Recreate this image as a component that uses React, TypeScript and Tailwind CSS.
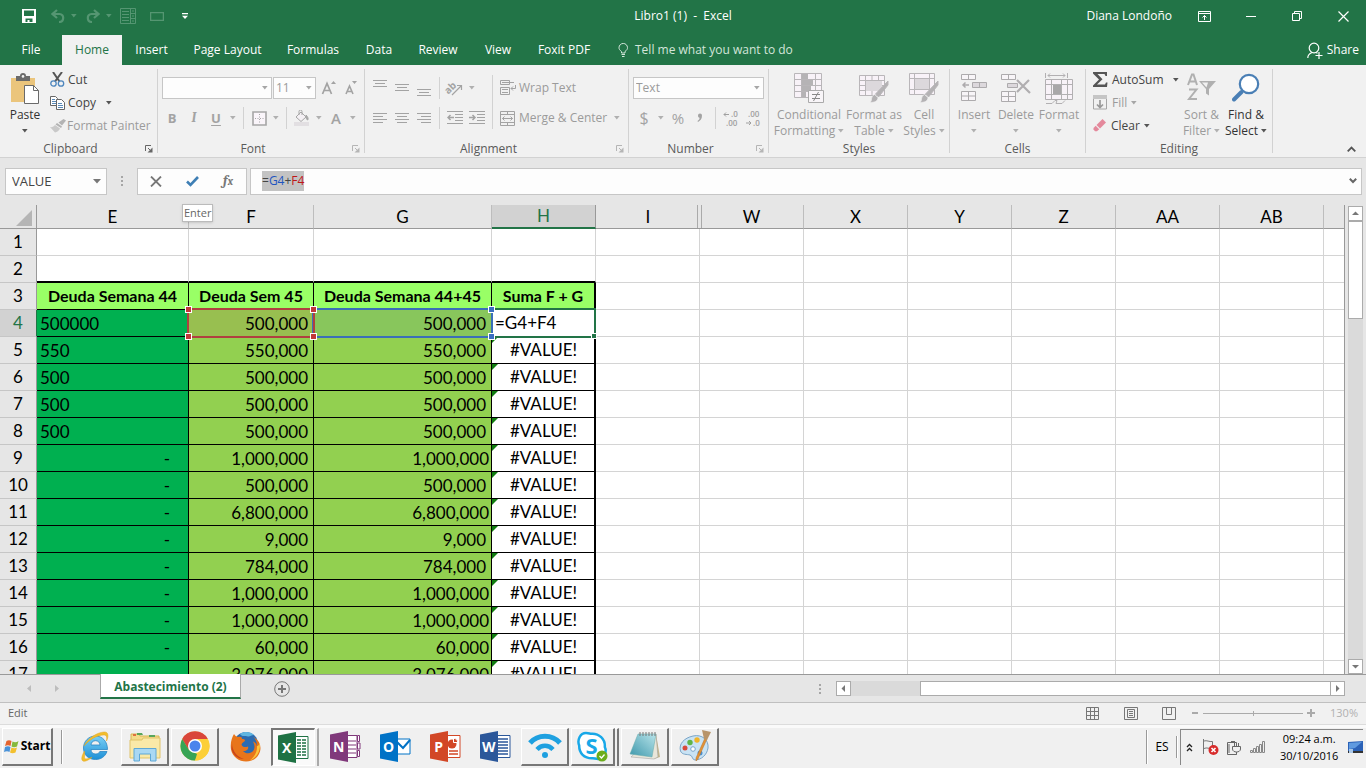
import React from "react";

type Kids = { children?: React.ReactNode };

function Caret({ className = "text-[#a6a6a6]" }: { className?: string }) {
  return (
    <svg width="6" height="4" viewBox="0 0 6 4" className={`shrink-0 ${className}`} aria-hidden="true">
      <path d="M0 0h5.6L2.8 3.4z" fill="currentColor" />
    </svg>
  );
}

function CaretBox({ dark = false }: { dark?: boolean }) {
  return (
    <span className="flex w-3 shrink-0 justify-center">
      <Caret className={dark ? "text-[#555]" : "text-[#b0b0b0]"} />
    </span>
  );
}

function Launcher({ dark = false }: { dark?: boolean }) {
  return (
    <svg width="8" height="8" viewBox="0 0 8 8" className={dark ? "text-[#666]" : "text-[#b5b5b5]"} aria-hidden="true">
      <path d="M.5 6V.5H6M3 3l3 3" fill="none" stroke="currentColor" />
      <path d="M7.500 2.500v5h-5z" fill="currentColor" />
    </svg>
  );
}

function Group({ label, width, launcher, children }: Kids & { label: string; width: string; launcher?: "dark" | "light" }) {
  return (
    <section aria-label={label} className={`flex shrink-0 ${width}`}>
      <div className="flex min-w-0 flex-1 flex-col">
        <div className="h-[72px] shrink-0">{children}</div>
        <div className="flex h-[17px] shrink-0 items-center pr-1 text-[#5a5a5a]">
          <span className={`flex-1 text-center ${launcher ? "-ml-1" : "pl-3"}`}>{label}</span>
          <button aria-label={`${label} settings`} className="w-2">
            {launcher && <Launcher dark={launcher === "dark"} />}
          </button>
        </div>
      </div>
      <div className="mt-px h-[84px] w-px bg-[#d2d2d2]" />
    </section>
  );
}

function Tool({ label, children }: Kids & { label: string }) {
  return (
    <button aria-label={label} className="flex h-[22px] w-[22px] shrink-0 items-center justify-center text-[#a3a3a3]">
      {children}
    </button>
  );
}

function Sep() {
  return <span className="mx-1 h-[22px] w-px shrink-0 bg-[#d2d2d2]" />;
}

function Lines({ rows, size = 15 }: { rows: [number, number, number][]; size?: number }) {
  return (
    <svg width={size} height="16" viewBox={`0 0 ${size} 16`} aria-hidden="true">
      {rows.map(([y, x1, x2]) => (
        <path key={y} d={`M${x1} ${y + 0.5}H${x2}`} stroke="currentColor" />
      ))}
    </svg>
  );
}

function BigButton({ icon, lines, caret, width, dark = false }: { icon: React.ReactNode; lines: string[]; caret?: boolean; width: string; dark?: boolean }) {
  const tone = dark ? "text-[#333]" : "text-[#9b9b9b]";
  return (
    <button className={`flex shrink-0 flex-col items-center pt-1 leading-4 ${width} ${tone}`}>
      <span className="mb-[3px] flex h-8 items-center justify-center">{icon}</span>
      <span className="whitespace-nowrap">{lines[0]}</span>
      <span className={`flex h-4 items-center whitespace-nowrap ${lines[1] ? "gap-[3px]" : ""}`}>
        {lines[1]}
        {caret && <Caret className={dark ? "text-[#555]" : "text-[#b0b0b0]"} />}
      </span>
    </button>
  );
}

/* ---------- Ribbon drawings ---------- */

const PasteIcon = () => (
  <svg width="30" height="31" viewBox="0 0 30 31">
    <path d="M1 5h24v24H1z" fill="#ebc57c" />
    <path d="M6 3h4a3 3 0 0 1 6 0h4v5H6z" fill="#6a6a6a" />
    <circle cx="13" cy="3.4" r="1.3" fill="#f1f1f1" />
    <path d="M14.500 12.500h9l5 5v13h-14z" fill="#fff" stroke="#6a6a6a" />
    <path d="M23.500 12.500v5h5" fill="none" stroke="#6a6a6a" />
  </svg>
);
const CutIcon = () => (
  <svg width="15" height="15" viewBox="0 0 15 15" fill="none">
    <path d="M3 0l6.500 9.500M12 0L5 9.500" stroke="#555" strokeWidth="2" />
    <circle cx="3.500" cy="11.500" r="2.700" stroke="#4e86bd" strokeWidth="1.300" />
    <circle cx="11" cy="11.500" r="2.700" stroke="#4e86bd" strokeWidth="1.300" />
  </svg>
);
const CopyIcon = () => (
  <svg width="15" height="14" viewBox="0 0 15 14" fill="#fff" stroke="#666">
    <path d="M.5.5h5l2 2v7h-7z" />
    <path d="M2 3.500h3M2 5.500h4M2 7.500h4" stroke="#5a8ab8" />
    <path d="M6.500 3.500h5l3 3v7h-8z" />
    <path d="M8 7.500h4M8 9.500h5M8 11.500h5" stroke="#5a8ab8" />
  </svg>
);
const PainterIcon = () => (
  <svg width="16" height="14" viewBox="0 0 16 14" fill="#b3b3b3">
    <path d="M13.500 0L16 1.500 12 6.500l-3.500-3z" />
    <path d="M7 4l5 3.500-1 1.500-5.500-3.500z" />
    <path d="M5 6l5 3.500C9 12 7 13 5 13.500L0 8c2 .5 4-.5 5-2z" fill="#c9c9c9" />
  </svg>
);
const BordersIcon = () => (
  <svg width="15" height="15" viewBox="0 0 15 15" fill="none">
    <path d="M1 1h13v13H1z" stroke="#a6a6a6" strokeWidth="1.600" fill="#faf5fa" />
    <path d="M7.500 3v10M3 7.500h10" stroke="#a6a6a6" strokeDasharray="1 1.500" />
  </svg>
);
const FillIcon = () => (
  <svg width="16" height="16" viewBox="0 0 16 16" fill="none" stroke="#a6a6a6">
    <path d="M0 12h15v4H0z" fill="#e2dfe2" stroke="none" />
    <path d="M2 7l5-5 5 5-5 4.500z" fill="#f4f0f4" />
    <path d="M5 5V1.500a1.500 1.500 0 0 1 3 0V5" />
    <path d="M12 5c2 2 2.500 3.500 1.800 5-1.500 0-1.800-3-1.800-5z" fill="#a6a6a6" />
  </svg>
);
const OrientIcon = () => (
  <svg width="18" height="16" viewBox="0 0 18 16" className="overflow-visible">
    <text x="-1" y="11" fontSize="10" fontWeight="700" fontFamily="Open Sans" fill="#a3a3a3" transform="rotate(-45 5 9)">ab</text>
    <path d="M6 15L15 6M11 5.500h4.500V10" fill="none" stroke="#a3a3a3" strokeWidth="1.200" />
  </svg>
);
const IndentIcon = ({ right = false }: { right?: boolean }) => (
  <svg width="16" height="14" viewBox="0 0 16 14" fill="none" stroke="#a3a3a3">
    <path d="M0 .5h16M8 3.500h8M8 6.500h8M8 9.500h8M0 12.500h16" />
    <path d={right ? "M0 6.500h6M3.500 4L6 6.500 3.500 9" : "M7 6.500H1M3.500 4L1 6.500 3.500 9"} strokeWidth="1.500" />
  </svg>
);
const WrapIcon = () => (
  <svg width="16" height="16" viewBox="0 0 16 16" fill="none" stroke="#a3a3a3">
    <path d="M.5.5h9v4h-9zM.5 7.500h9v7h-9zM2 2.500h12M2 9.500h6M2 12.500h6" />
    <path d="M15.500 5v3.500H11M13 6.500l-2 2 2 2" />
  </svg>
);
const MergeIcon = () => (
  <svg width="16" height="15" viewBox="0 0 16 15" fill="none" stroke="#a3a3a3">
    <path d="M.5.5h14v14H.5zM.5 3.500h14M.5 11.500h14M7.500.5v3M7.500 11.500v3" />
    <path d="M2.500 7.500h10M4.500 5.500l-2 2 2 2M10.500 5.500l2 2-2 2" />
  </svg>
);
const DecimalIcon = ({ more = false }: { more?: boolean }) => (
  <svg width="16" height="15" viewBox="0 0 16 15" fontFamily="Open Sans" fontSize="8" fontWeight="600" fill="#a0a0a0" className="overflow-visible">
    <text x={more ? 8 : 3} y="6">{more ? ".0" : ".00"}</text>
    <text x={more ? 3 : 8} y="15">{more ? ".00" : ".0"}</text>
    <path d={more ? "M6 3.500H1M3 1.500l-2 2 2 2" : "M1 12h5M4 10l2 2-2 2"} fill="none" stroke="#a0a0a0" />
  </svg>
);
const Brush = () => (
  <>
    <path d="M29 8v4L19.500 24l-3-3z" fill="#b4b2b4" />
    <path d="M15.500 21.500l3.500 3c0 4-4 5-8 5 2-2 1-3 2-5.500.6-1.400 1.500-2 2.500-2.500z" fill="#b4b2b4" stroke="#f1f1f1" strokeWidth=".7" />
  </>
);
const CondIcon = () => (
  <svg width="30" height="31" viewBox="0 0 30 31" fill="none" stroke="#b9b6b9">
    <path d="M.5.5h27v24H.5zM.5 6.500h27M.5 12.500h27M.5 18.500h27M7.500.5v24M21.500.5v24" fill="#f8f2f8" />
    <path d="M8 1h6v5H8zM8 7h11v5H8zM8 13h9v5H8zM8 19h4v5H8z" fill="#b5b3b5" stroke="none" />
    <path d="M14.500 17.500h15v12h-15z" fill="#f8f5f8" stroke="#aaa" />
    <path d="M18 21.500h8M18 25.500h8M24.500 19l-5 9" stroke="#888" />
  </svg>
);
const TableIcon = () => (
  <svg width="30" height="31" viewBox="0 0 30 31" fill="none" stroke="#b9b6b9">
    <path d="M.5 2.500h25v20H.5zM.5 7.500h25M.5 12.500h25M.5 17.500h25M6.500 2.500v20M13 2.500v20M19.500 2.500v20" fill="#f8f2f8" />
    <path d="M7 8h16v10H7z" fill="#dcd8dc" stroke="none" />
    <Brush />
  </svg>
);
const CellStyleIcon = () => (
  <svg width="30" height="31" viewBox="0 0 30 31" fill="none" stroke="#b9b6b9">
    <path d="M.5.5h25v21H.5zM.5 5.500h25M.5 16.500h25M5.500.5v21M20.500.5v21" fill="#f8f2f8" />
    <path d="M6 6h14v10H6z" fill="#dcd8dc" stroke="none" />
    <Brush />
  </svg>
);
const InsertIcon = () => (
  <svg width="28" height="28" viewBox="0 0 28 28" fill="#f8f5f8" stroke="#adabad">
    <path d="M1.500.5h14v5h-14zM8.500.5v5M1.500 17.500h14v9h-14zM8.500 17.500v9M1.500 22h14" />
    <path d="M12.500 8.500h14v5h-14zM19.500 8.500v5" fill="#dcd8dc" />
    <path d="M9 11H3M5.500 8.500L3 11l2.500 2.500" fill="none" strokeWidth="1.500" />
  </svg>
);
const DeleteIcon = () => (
  <svg width="30" height="28" viewBox="0 0 30 28" fill="#f8f5f8" stroke="#adabad">
    <path d="M.5.5h14v5H.500zM7.500.5v5M.5 17.500h14v10H.500zM7.500 17.500v10M.5 22.500h14" />
    <path d="M6.500 9.500h10v4h-10z" fill="#dcd8dc" />
    <path d="M16 6l13 13M28 6L16 18" fill="none" stroke="#b0aeb0" strokeWidth="2.200" />
  </svg>
);
const FormatIcon = () => (
  <svg width="29" height="31" viewBox="0 0 29 31" fill="none" stroke="#b2b0b2">
    <path d="M.5 0v5M22.500 0v5M3 2.500h17M5 .5l-2 2 2 2M18 .5l2 2-2 2" />
    <path d="M.5 6.500h27v20H.5zM.5 11.500h27M.5 21.500h27M6.500 6.500v20M16.500 6.500v20M22.500 6.500v20" fill="#f8f2f8" />
    <path d="M8 12h8v9H8z" fill="#a9a7a9" stroke="none" />
    <path d="M1 30.500h6l3-3h2l-1 3h6l3-3" />
  </svg>
);
const SumIcon = () => (
  <svg width="15" height="15" viewBox="0 0 15 15">
    <path d="M0 0h14v4h-1.500L11.500 2H4.500l5 5.300L4 12.500h8l1-2h1.500l-.5 4.500H0v-1.500l6-6L0 1.500z" fill="#555" />
  </svg>
);
const DownFillIcon = () => (
  <svg width="15" height="15" viewBox="0 0 15 15" fill="none" stroke="#a6a6a6">
    <path d="M.5 1h13v13H.5z" />
    <path d="M0 0h14v4H0z" fill="#c5c5c5" stroke="none" />
    <path d="M7 5v7M4 9.500l3 3 3-3" stroke="#999" strokeWidth="1.700" />
  </svg>
);
const EraserIcon = () => (
  <svg width="14" height="14" viewBox="0 0 14 14">
    <path d="M9.500 0L13 3.500 7 9.500 3.500 6z" fill="#e4899c" />
    <path d="M2.700 6.800L6.200 10.300 4 12.300H2L.5 10.500V9z" fill="#e4899c" />
  </svg>
);
const SortIcon = () => (
  <svg width="30" height="30" viewBox="0 0 30 30" fill="none" stroke="#b0b0b0">
    <path d="M1 12L5 1.500h1.500L10 12M2.500 8.500h6.500M2 16.500h7.500L2 26h8" strokeWidth="2" />
    <path d="M12 8h17l-7 8v6.500l-3-2V16z" fill="#b0b0b0" stroke="none" />
    <path d="M15 9.500h6l-1.500 5z" fill="#f1f1f1" stroke="none" />
  </svg>
);
const FindIcon = () => (
  <svg width="28" height="30" viewBox="0 0 28 30">
    <path d="M9.500 19L2 26.500" stroke="#4a7fb5" strokeWidth="4" strokeLinecap="round" />
    <circle cx="17" cy="11" r="9.200" fill="#fff" stroke="#4a7fb5" strokeWidth="2.200" />
  </svg>
);

/* ---------- Window chrome ---------- */

const TABS: [string, string][] = [
  ["File", "w-[62px]"],
  ["Home", "w-[60px]"],
  ["Insert", "w-[59px]"],
  ["Page Layout", "w-[93px]"],
  ["Formulas", "w-[78px]"],
  ["Data", "w-[54px]"],
  ["Review", "w-[64px]"],
  ["View", "w-[56px]"],
  ["Foxit PDF", "w-[76px]"],
];

function TitleBar() {
  const win = "flex h-8 w-[46px] items-center justify-center";
  return (
    <header className="grid h-[35px] grid-cols-[1fr_auto_1fr] items-center bg-[#227447] pb-[3px] text-white">
      <div className="flex items-center pl-[22px] text-[#559672]">
        <button aria-label="Save" className="text-white">
          <svg width="14" height="14" viewBox="0 0 14 14">
            <path d="M0 0h14v14H0zM2 1.500v5.500h10V1.500zM3.500 9.500v3.500h2v-2h2v2h3V9.500z" fill="currentColor" fillRule="evenodd" />
          </svg>
        </button>
        <button aria-label="Undo" className="ml-[15px] flex items-center gap-[6px]">
          <svg width="14" height="14" viewBox="0 0 14 14" fill="none" stroke="currentColor" strokeWidth="2.200">
            <path d="M6 1L1.500 5 6 9M2 5h6.500c5 0 5 8-.5 8" />
          </svg>
          <Caret className="text-[#559672]" />
        </button>
        <button aria-label="Redo" className="ml-[9px] flex items-center gap-[6px]">
          <svg width="14" height="14" viewBox="0 0 14 14" fill="none" stroke="currentColor" strokeWidth="2.200">
            <path d="M8 1l4.500 4L8 9M12 5H5.500c-5 0-5 8 .5 8" />
          </svg>
          <Caret className="text-[#559672]" />
        </button>
        <button aria-label="Form" className="ml-2">
          <svg width="16" height="16" viewBox="0 0 16 16" fill="none" stroke="currentColor">
            <path d="M.5.5h15v15H.5zM10.500.5v15M2 3.500h7M2 6.500h7M2 9.500h7M2 12.500h7M10.500 5.500h5M10.500 10.500h5M12 3h2M12 8h2M12 13h2" />
          </svg>
        </button>
        <button aria-label="Shape" className="ml-[14px]">
          <svg width="14" height="9" viewBox="0 0 14 9" fill="none" stroke="currentColor">
            <path d="M.5.5h13v8H.5z" strokeWidth="1.500" />
          </svg>
        </button>
        <button aria-label="Customize toolbar" className="ml-[18px] text-white">
          <svg width="7" height="6" viewBox="0 0 7 6">
            <path d="M0 0h6v1.300H0zM0 2.800h6L3 6z" fill="currentColor" />
          </svg>
        </button>
      </div>
      <h1 className="whitespace-pre">Libro1 (1)  -  Excel</h1>
      <div className="flex items-center justify-end">
        <span className="mr-[10px]">Diana Londoño</span>
        <button aria-label="Ribbon options" className={win}>
          <svg width="14" height="11" viewBox="0 0 14 11" fill="none" stroke="white">
            <path d="M.5.5h12v10H.5zM.5 2.500h12M6.500 9V4.500M4.500 6.500l2-2 2 2" />
          </svg>
        </button>
        <button aria-label="Minimize" className={win}>
          <span className="h-px w-[10px] bg-white" />
        </button>
        <button aria-label="Restore" className={win}>
          <svg width="11" height="11" viewBox="0 0 11 11" fill="none" stroke="white">
            <path d="M.5 2.500h7v7h-7zM2.500 2.500v-2h7v7h-2" />
          </svg>
        </button>
        <button aria-label="Close" className={win}>
          <svg width="11" height="11" viewBox="0 0 11 11" stroke="white">
            <path d="M.5.5l10 10M10.500.5l-10 10" strokeWidth="1.200" />
          </svg>
        </button>
      </div>
    </header>
  );
}

function TabBar() {
  return (
    <nav className="flex h-[30px] bg-[#227447] text-white">
      {TABS.map(([t, w]) => (
        <button key={t} className={`${w} shrink-0 whitespace-nowrap ${t === "Home" ? "bg-[#f1f1f1] text-[#227447]" : ""}`}>
          {t}
        </button>
      ))}
      <button className="ml-4 flex items-center gap-[6px] whitespace-nowrap text-[#d3e5da]">
        <svg width="11" height="14" viewBox="0 0 11 14" fill="none" stroke="currentColor">
          <path d="M3.500 10V8.500C1.500 7 1 6 1 4.700a4.200 4.200 0 0 1 8.500 0C9.500 6 9 7 7 8.500V10zM3.500 11.500H7M4 13.500h2.500" />
        </svg>
        Tell me what you want to do
      </button>
      <button className="mr-[7px] ml-auto flex items-center gap-1">
        <svg width="16" height="17" viewBox="0 0 16 17" fill="none" stroke="white" strokeWidth="1.200">
          <circle cx="7" cy="6" r="4.800" />
          <path d="M.8 16c0-3 1.700-4.500 4.200-5.500M9 10.500l1.500.8M8.500 13.500h7M12 10v7" />
        </svg>
        Share
      </button>
    </nav>
  );
}

function Ribbon() {
  const field = "h-[22px] appearance-none rounded-none border border-[#c6c6c6] bg-[#fdfdfd] pr-1 pl-[2px] text-[#9b9b9b] outline-none";
  return (
    <div className="relative flex h-[93px] shrink-0 overflow-hidden border-b border-[#d2d2d2] bg-[#f1f1f1] pt-[3px] text-[#444]">
      <Group label="Clipboard" width="w-[158px]" launcher="dark">
        <div className="flex">
          <BigButton width="w-[50px]" dark icon={<PasteIcon />} lines={["Paste", ""]} caret />
          <div className="flex flex-col">
            <button className="flex h-[23px] items-center gap-[3px]"><CutIcon />Cut</button>
            <button className="flex h-[23px] items-center gap-[3px]">
              <CopyIcon />Copy<span className="ml-1"><CaretBox dark /></span>
            </button>
            <button className="flex h-[23px] items-center gap-px whitespace-nowrap text-[#9b9b9b]"><PainterIcon />Format Painter</button>
          </div>
        </div>
      </Group>

      <Group label="Font" width="w-[207px]" launcher="light">
        <div className="flex items-center gap-px pt-[9px] pl-1">
          <span className="relative flex items-center">
            <select aria-label="Font" className={`${field} w-[110px]`}><option></option></select>
            <span className="pointer-events-none absolute right-1"><Caret /></span>
          </span>
          <span className="relative flex items-center">
            <select aria-label="Font size" className={`${field} w-[43px]`}><option>11</option></select>
            <span className="pointer-events-none absolute right-1"><Caret /></span>
          </span>
          <Tool label="Increase font size">
            <svg width="15" height="14" viewBox="0 0 15 14" fill="none" stroke="#a3a3a3"><path d="M1.500 13L6 2.500 10.500 13M3 9.500h6" strokeWidth="1.700" /><path d="M10 3l2.500-3L15 3z" fill="#a3a3a3" stroke="none" /></svg>
          </Tool>
          <Tool label="Decrease font size">
            <svg width="15" height="14" viewBox="0 0 15 14" fill="none" stroke="#a3a3a3"><path d="M2 13L5.500 5 9 13M3.500 10.500H8" strokeWidth="1.600" /><path d="M8 0h5l-2.500 3z" fill="#a3a3a3" stroke="none" /></svg>
          </Tool>
        </div>
        <div className="mt-2 flex items-center pl-[3px]">
          <Tool label="Bold"><b className="text-[13px]">B</b></Tool>
          <Tool label="Italic"><i className="font-serif text-sm font-bold">I</i></Tool>
          <Tool label="Underline"><span className="text-[13px] font-bold underline underline-offset-2">U</span></Tool>
          <CaretBox /><Sep />
          <Tool label="Borders"><BordersIcon /></Tool><CaretBox /><Sep />
          <Tool label="Fill color"><FillIcon /></Tool><CaretBox />
          <Tool label="Font color"><span className="text-[15px] font-semibold">A</span></Tool><CaretBox />
        </div>
      </Group>

      <Group label="Alignment" width="w-[264px]" launcher="light">
        <div className="flex">
          <div className="pl-1">
            <div className="flex items-center pt-[9px]">
              <Tool label="Top align"><Lines rows={[[0, 0, 14], [3, 2, 12], [6, 0, 14]]} /></Tool>
              <Tool label="Middle align"><Lines rows={[[4, 0, 14], [7, 2, 12], [10, 0, 14]]} /></Tool>
              <Tool label="Bottom align"><Lines rows={[[9, 0, 14], [12, 2, 12], [15, 0, 14]]} /></Tool>
              <Sep />
              <Tool label="Orientation"><OrientIcon /></Tool><CaretBox />
            </div>
            <div className="mt-2 flex items-center">
              <Tool label="Align left"><Lines rows={[[3, 0, 14], [6, 0, 10], [9, 0, 14], [12, 0, 10]]} /></Tool>
              <Tool label="Center"><Lines rows={[[3, 0, 14], [6, 2, 12], [9, 0, 14], [12, 2, 12]]} /></Tool>
              <Tool label="Align right"><Lines rows={[[3, 0, 14], [6, 4, 14], [9, 0, 14], [12, 4, 14]]} /></Tool>
              <Sep />
              <Tool label="Decrease indent"><IndentIcon /></Tool>
              <Tool label="Increase indent"><IndentIcon right /></Tool>
            </div>
          </div>
          <span className="mt-[7px] mr-[7px] ml-1 h-[54px] w-px bg-[#d2d2d2]" />
          <div className="flex-1 whitespace-nowrap text-[#9b9b9b]">
            <button className="mt-[9px] flex h-[22px] items-center gap-[3px]"><WrapIcon />Wrap Text</button>
            <button className="mt-2 flex h-[22px] w-full items-center gap-[3px]">
              <MergeIcon /><span className="flex-1 text-left">Merge &amp; Center</span><span className="mr-[5px]"><CaretBox /></span>
            </button>
          </div>
        </div>
      </Group>

      <Group label="Number" width="w-[140px]" launcher="light">
        <div className="flex pt-[9px] pr-1 pl-1">
          <span className="relative flex flex-1 items-center">
            <select aria-label="Number format" className={`${field} w-full`}><option>Text</option></select>
            <span className="pointer-events-none absolute right-1"><Caret /></span>
          </span>
        </div>
        <div className="mt-2 flex items-center pl-1">
          <Tool label="Currency"><span className="text-base">$</span></Tool><CaretBox />
          <Tool label="Percent"><span className="text-[15px]">%</span></Tool>
          <Tool label="Comma style">
            <svg width="6" height="10" viewBox="0 0 6 10" fill="#a3a3a3"><path d="M1 2.500a2 2 0 1 1 4 0C5 6 3.500 7.500 1 9l-.5-1C2 7 2.700 6 2.500 4.700 1.500 4.700 1 3.800 1 2.500z" /></svg>
          </Tool>
          <Sep />
          <Tool label="Increase decimal"><DecimalIcon more /></Tool>
          <Tool label="Decrease decimal"><DecimalIcon /></Tool>
        </div>
      </Group>

      <Group label="Styles" width="w-[181px]">
        <div className="flex pl-1">
          <BigButton width="w-[72px]" icon={<CondIcon />} lines={["Conditional", "Formatting"]} caret />
          <BigButton width="w-[58px]" icon={<TableIcon />} lines={["Format as", "Table"]} caret />
          <BigButton width="w-[42px]" icon={<CellStyleIcon />} lines={["Cell", "Styles"]} caret />
        </div>
      </Group>

      <Group label="Cells" width="w-[136px]">
        <div className="flex pl-1">
          <BigButton width="w-10" icon={<InsertIcon />} lines={["Insert", ""]} caret />
          <BigButton width="w-11" icon={<DeleteIcon />} lines={["Delete", ""]} caret />
          <BigButton width="w-[42px]" icon={<FormatIcon />} lines={["Format", ""]} caret />
        </div>
      </Group>

      <Group label="Editing" width="w-[187px]">
        <div className="flex pl-[7px]">
          <div className="flex w-[86px] flex-col">
            <button className="flex h-[23px] items-center gap-1"><SumIcon />AutoSum<span className="ml-auto"><Caret className="text-[#555]" /></span></button>
            <button className="flex h-[23px] items-center gap-1 text-[#9b9b9b]"><DownFillIcon />Fill<Caret /></button>
            <button className="flex h-[23px] items-center gap-1"><EraserIcon />Clear<Caret className="text-[#555]" /></button>
          </div>
          <BigButton width="w-[45px]" icon={<SortIcon />} lines={["Sort &", "Filter"]} caret />
          <BigButton width="w-[44px]" dark icon={<FindIcon />} lines={["Find &", "Select"]} caret />
        </div>
      </Group>

      <button aria-label="Collapse ribbon" className="mr-[10px] mb-[5px] ml-auto self-end">
        <svg width="9" height="6" viewBox="0 0 9 6" fill="none" stroke="#555" strokeWidth="1.800"><path d="M.7 5.300L4.500 1.500l3.800 3.800" /></svg>
      </button>
    </div>
  );
}

function FormulaBar() {
  const box = "flex h-[27px] items-center border border-[#c6c6c6] bg-[#fdfdfd]";
  return (
    <div className="flex h-[47px] shrink-0 items-center bg-[#e6e6e6] pr-1 pb-px pl-[5px] text-[#444]">
      <div className={`${box} w-[102px] pr-[5px]`}>
        <input aria-label="Name box" defaultValue="VALUE" className="w-full min-w-0 bg-transparent pl-[6px] text-[13px] outline-none" />
        <button aria-label="Names">
          <svg width="8" height="5" viewBox="0 0 8 5"><path d="M0 0h8L4 4.500z" fill="#777" /></svg>
        </button>
      </div>
      <svg width="30" height="11" viewBox="0 0 30 11" fill="#a6a6a6" className="shrink-0" aria-hidden="true">
        <path d="M14 0h2v2h-2zM14 4h2v2h-2zM14 8h2v2h-2z" />
      </svg>
      <div className={`${box} w-[110px] shrink-0`}>
        <button aria-label="Cancel" className="flex flex-1 justify-center">
          <svg width="12" height="11" viewBox="0 0 12 11" stroke="#777" strokeWidth="1.800"><path d="M1 .5l10 10M11 .5L1 10.500" /></svg>
        </button>
        <span className="relative flex flex-1 justify-center">
          <button aria-label="Enter">
            <svg width="13" height="11" viewBox="0 0 13 11" fill="none" stroke="#3f7fb5" strokeWidth="2.600"><path d="M1 5.500l3.500 3.500L12 1" /></svg>
          </button>
          <span role="tooltip" className="absolute top-7 left-2 z-20 border border-[#bbb] bg-white px-px text-[11px] leading-4 text-[#666] shadow">Enter</span>
        </span>
        <button aria-label="Insert function" className="flex-1 font-serif text-sm font-bold text-[#777] italic">
          f<span className="text-[11px]">x</span>
        </button>
      </div>
      <div className={`${box} ml-[3px] flex-1`}>
        <div role="textbox" aria-label="Formula" contentEditable suppressContentEditableWarning className="ml-[11px] flex-1 outline-none">
          <span className="inline-block bg-[#c3c3c3] leading-5">=<span className="text-[#1f55c0]">G4</span>+<span className="text-[#c01818]">F4</span></span>
        </div>
        <button aria-label="Expand formula bar" className="mr-1">
          <svg width="8" height="6" viewBox="0 0 8 6" fill="none" stroke="#666" strokeWidth="2"><path d="M.8.8L4 4l3.200-3.200" /></svg>
        </button>
      </div>
    </div>
  );
}

/* ---------- Sheet ---------- */

const COLUMNS: [string, string][] = [
  ["E", "w-[152px]"], ["F", "w-[125px]"], ["G", "w-[178px]"], ["H", "w-[104px]"], ["I", "w-[104px]"],
  ["W", "w-[104px]"], ["X", "w-[104px]"], ["Y", "w-[104px]"], ["Z", "w-[104px]"], ["AA", "w-[104px]"], ["AB", "w-[104px]"],
];

const ROWS: { n: number; debt: string; amount: string }[] = [
  { n: 4, debt: "500000", amount: "500,000" },
  { n: 5, debt: "550", amount: "550,000" },
  { n: 6, debt: "500", amount: "500,000" },
  { n: 7, debt: "500", amount: "500,000" },
  { n: 8, debt: "500", amount: "500,000" },
  { n: 9, debt: "-", amount: "1,000,000" },
  { n: 10, debt: "-", amount: "500,000" },
  { n: 11, debt: "-", amount: "6,800,000" },
  { n: 12, debt: "-", amount: "9,000" },
  { n: 13, debt: "-", amount: "784,000" },
  { n: 14, debt: "-", amount: "1,000,000" },
  { n: 15, debt: "-", amount: "1,000,000" },
  { n: 16, debt: "-", amount: "60,000" },
  { n: 17, debt: "-", amount: "3,076,000" },
];

const BLANK = "border-r border-b border-[#d4d4d4] bg-white";

function RowHead({ n }: { n: number }) {
  return (
    <th scope="row" className={`border-r border-b border-b-[#c6c6c6] font-normal ${n === 4 ? "border-r-[#227447] bg-[#d2d2d2] text-[#227447]" : "border-r-[#999] bg-[#e6e6e6]"}`}>
      {n}
    </th>
  );
}

function Blanks({ count }: { count: number }) {
  return (
    <>
      {Array.from({ length: count }, (_, i) => (
        <td key={i} className={BLANK} />
      ))}
      <td className="border-b border-[#d4d4d4] bg-white" />
    </>
  );
}

function Handles({ color }: { color: string }) {
  const dot = `absolute h-[7px] w-[7px] border border-white ${color}`;
  return (
    <>
      <span className={`${dot} -top-1 -left-1`} />
      <span className={`${dot} -top-1 -right-1`} />
      <span className={`${dot} -bottom-1 -left-1`} />
      <span className={`${dot} -right-1 -bottom-1`} />
    </>
  );
}

function Sheet() {
  const head = "border-r border-b border-black bg-[#99ff66] text-center text-base leading-6 font-bold";
  const money = "relative border-r border-b border-black pt-[2px] text-right leading-6";
  return (
    <div className="relative min-w-0 flex-1 overflow-hidden border-r border-[#999] bg-white">
      <table className="w-full table-fixed border-separate border-spacing-0 font-[Lato,sans-serif] text-[17px] leading-[26px] text-black">
        <colgroup>
          <col className="w-[37px]" />
          {COLUMNS.map(([c, w]) => <col key={c} className={w} />)}
          <col />
        </colgroup>
        <thead>
          <tr className="h-6">
            <th className="border-r border-b border-[#999] bg-[#e6e6e6]" aria-label="Select all">
              <svg width="17" height="17" viewBox="0 0 17 17" className="mt-1 ml-4"><path d="M16 0v16H0z" fill="#b5b5b5" /></svg>
            </th>
            {COLUMNS.map(([c]) => (
              <th
                key={c}
                scope="col"
                className={`relative leading-[22px] font-normal ${c === "H" ? "border-r border-b-2 border-r-[#999] border-b-[#227447] bg-[#d2d2d2] text-[#227447]" : c === "I" ? "border-b border-[#999] bg-[#e6e6e6]" : "border-r border-b border-r-[#bdbdbd] border-b-[#999] bg-[#e6e6e6]"}`}
              >
                {c}
                {c === "I" && <span className="absolute inset-y-0 right-[2px] w-px bg-[#aaa]" />}
                {c === "W" && <span className="absolute inset-y-0 left-px w-px bg-[#aaa]" />}
              </th>
            ))}
            <th className="border-b border-[#999] bg-[#e6e6e6]" aria-label="Next column" />
          </tr>
        </thead>
        <tbody>
          <tr className="h-[27px]"><RowHead n={1} /><Blanks count={11} /></tr>
          <tr className="h-[27px]">
            <RowHead n={2} />
            {[0, 1, 2, 3].map((i) => <td key={i} className="border-r border-b-2 border-r-[#d4d4d4] border-b-black bg-white" />)}
            <Blanks count={7} />
          </tr>
          <tr className="h-[27px]">
            <RowHead n={3} />
            <td className={head}>Deuda Semana 44</td>
            <td className={head}>Deuda Sem 45</td>
            <td className={head}>Deuda Semana 44+45</td>
            <td className={`${head} border-r-2`}>Suma F + G</td>
            <Blanks count={7} />
          </tr>
          {ROWS.map(({ n, debt, amount }) => {
            const pad = amount.length > 7 || n === 16 ? "pr-[2px]" : "pr-[5px]";
            const active = n === 4;
            return (
              <tr key={n} className="h-[27px]">
                <RowHead n={n} />
                <td className={`border-r border-b border-black bg-[#00b050] pt-[2px] leading-6 ${debt === "-" ? "pr-[18px] text-right" : "pl-[3px]"}`}>{debt}</td>
                <td className={`${money} pr-[5px] ${active ? "bg-[#98bf50]" : "bg-[#92d050]"}`}>
                  {amount}
                  {active && <span className="absolute -inset-[2px] z-10 border-2 border-[#b04040]"><Handles color="bg-[#c03838]" /></span>}
                </td>
                <td className={`${money} ${pad} ${active ? "bg-[#88c65c]" : "bg-[#92d050]"}`}>
                  {amount}
                  {active && <span className="absolute -inset-[2px] z-[5] border-2 border-[#3a6fb8]"><Handles color="bg-[#3a6fc0]" /></span>}
                </td>
                {active ? (
                  <td className="relative border-r-2 border-b border-black bg-white">
                    <input aria-label="H4" defaultValue="=G4+F4" className="block h-[26px] w-full bg-white pl-[3px] outline-none" />
                    <span className="pointer-events-none absolute -top-[2px] -right-[2px] -bottom-[2px] left-0 z-[4] border-2 border-l-0 border-[#227447]">
                      <span className="absolute -right-[3px] -bottom-[3px] h-[6px] w-[6px] border border-white bg-[#227447]" />
                    </span>
                  </td>
                ) : (
                  <td className="relative border-r-2 border-b border-black bg-white pl-px text-center leading-6">
                    <svg width="6" height="6" viewBox="0 0 6 6" className="absolute top-0 left-0" aria-hidden="true"><path d="M0 0h6L0 6z" fill="#107c10" /></svg>
                    #VALUE!
                  </td>
                )}
                <Blanks count={7} />
              </tr>
            );
          })}
        </tbody>
      </table>
    </div>
  );
}

function ScrollButton({ dir, label }: { dir: string; label: string }) {
  return (
    <button aria-label={label} className="flex h-[15px] w-[15px] shrink-0 items-center justify-center border border-[#ababab] bg-white">
      <svg width="7" height="7" viewBox="0 0 7 7"><path d={dir} fill="#777" /></svg>
    </button>
  );
}

function SheetTabs() {
  return (
    <div className="flex h-[29px] shrink-0 border-t border-b border-t-[#999] border-b-[#c0c0c0] bg-[#e6e6e6]">
      <div className="flex w-[100px] shrink-0 items-center gap-6 pl-[27px] text-[#bdbdbd]">
        <button aria-label="Previous sheet"><svg width="4" height="7" viewBox="0 0 4 7"><path d="M4 0v7L0 3.500z" fill="currentColor" /></svg></button>
        <button aria-label="Next sheet"><svg width="4" height="7" viewBox="0 0 4 7"><path d="M0 0v7l4-3.500z" fill="currentColor" /></svg></button>
      </div>
      <button className="relative -mt-px h-[25px] w-[141px] border-r border-b-2 border-l border-x-[#aaa] border-b-[#227447] bg-white pt-[2px] font-bold whitespace-nowrap text-[#227447]">Abastecimiento (2)</button>
      <button aria-label="New sheet" className="ml-[33px]">
        <svg width="16" height="16" viewBox="0 0 16 16" fill="none" stroke="#777"><circle cx="8" cy="8" r="7.300" /><path d="M8 4v8M4 8h8" strokeWidth="2" /></svg>
      </button>
      <div className="mr-[21px] ml-auto flex w-[526px] items-center">
        <svg width="17" height="10" viewBox="0 0 17 10" fill="#a6a6a6" className="shrink-0" aria-hidden="true"><path d="M0 0h2v2H0zM0 4h2v2H0zM0 8h2v2H0z" /></svg>
        <ScrollButton dir="M5 0v7L1.500 3.500z" label="Scroll left" />
        <div className="flex h-[15px] flex-1 bg-[#dadada] pl-[69px]">
          <div className="flex-1 border border-r-0 border-[#ababab] bg-white" />
        </div>
        <ScrollButton dir="M2 0v7l3.500-3.500z" label="Scroll right" />
      </div>
    </div>
  );
}

function StatusBar() {
  return (
    <footer className="flex h-[21px] shrink-0 items-center bg-[#f1f1f1] pr-2 pb-px pl-2 text-[11px] text-[#666]">
      <span>Edit</span>
      <div className="ml-auto flex items-center text-[#777]">
        <button aria-label="Normal view" className="mr-6">
          <svg width="14" height="13" viewBox="0 0 14 13" fill="none" stroke="currentColor"><path d="M.5.5h12v12H.5zM.5 4.500h12M.5 8.500h12M4.500.5v12M8.500.5v12" /></svg>
        </button>
        <button aria-label="Page layout view" className="mr-6">
          <svg width="14" height="13" viewBox="0 0 14 13" fill="none" stroke="currentColor"><path d="M.5.5h13v12H.5zM3.500 2.500h7v8h-7zM5 4.500h4M5 6.500h4M5 8.500h4" /></svg>
        </button>
        <button aria-label="Page break view" className="mr-4">
          <svg width="14" height="13" viewBox="0 0 14 13" fill="none" stroke="currentColor"><path d="M.5.5h13v12H.5zM4.500.5v7h5v-7" /></svg>
        </button>
        <button aria-label="Zoom out" className="mr-[5px] h-[2px] w-[6px] bg-[#aaa]" />
        <label className="relative flex h-3 w-[100px] items-center justify-center">
          <span className="absolute inset-x-0 h-px bg-[#aaa]" />
          <span className="h-[5px] w-px bg-[#aaa]" />
          <input type="range" aria-label="Zoom" min="10" max="400" defaultValue="130" className="absolute inset-0 w-full opacity-0" />
        </label>
        <button aria-label="Zoom in" className="mr-[15px] ml-1">
          <svg width="8" height="8" viewBox="0 0 8 8" stroke="#aaa" strokeWidth="2"><path d="M4 0v8M0 4h8" /></svg>
        </button>
        <span className="text-[#b0b0b0]">130%</span>
      </div>
    </footer>
  );
}

/* ---------- Taskbar ---------- */

function OfficeIcon({ letter, color, children }: Kids & { letter: string; color: string }) {
  return (
    <svg width="31" height="31" viewBox="0 0 31 31">
      {children}
      <path d="M0 3.500L18 0v31L0 27.500z" fill={color} />
      <text x="8.700" y="20.500" textAnchor="middle" fontFamily="Open Sans" fontWeight="700" fontSize="14" fill="#fff">{letter}</text>
    </svg>
  );
}

const IeIcon = () => (
  <svg width="30" height="31" viewBox="0 0 30 31" fill="none">
    <defs><linearGradient id="ie" x1="0" y1="0" x2="0" y2="1"><stop offset="0" stopColor="#7ad0f5" /><stop offset="1" stopColor="#1d8fd6" /></linearGradient></defs>
    <path d="M27 20.500C25 26 20.500 28.500 15.500 28.500 8 28.500 3.500 23.500 3.500 17S8.500 5 15.500 5 27.500 10.500 27.500 18.500H11c0 3 2 4.500 4.800 4.500 2 0 3.200-.8 4-2.500zM11 14h9c-.2-2.800-2-4.300-4.500-4.300S11.200 11.300 11 14z" fill="url(#ie)" stroke="#2b86c4" strokeWidth=".8" />
    <path d="M4.500 20C1.500 25 .5 30 4 30.300c2 0 5-1.500 8-4-5 2-8 2.500-7.500-.3.200-2 0-4 0-6zM4 15C8 7 17 1.500 24 1c5-.3 4.500 5 2.500 9 .5-3.500.5-6-3-6C17 4 9 9 4 15z" fill="#f2bd2c" stroke="#e0a520" strokeWidth=".5" />
  </svg>
);
const FolderIcon = () => (
  <svg width="34" height="31" viewBox="0 0 34 31">
    <path d="M3 3h8l1 2h19v20H3z" fill="#f5dc8a" stroke="#d9b654" />
    <path d="M9 2h5l1 2H9zM21 4h6v2h-6z" fill="#58a65c" /><path d="M5 3h3v2H5z" fill="#e07040" />
    <path d="M2 9h12l1-2h17v20H2z" fill="#fae9a8" stroke="#dfc36a" />
    <path d="M6 30V17.500h22V30h-5.500v-7h-11v7z" fill="#a9d8f3" stroke="#5fa8d5" />
  </svg>
);
const ChromeIcon = () => (
  <svg width="30" height="30" viewBox="0 0 30 30">
    <circle cx="15" cy="15" r="14.500" fill="#fccf38" />
    <path d="M15 15L8.500 18.500 2.200 8A14.500 14.500 0 0 1 27.800 8H15z" fill="#d9463a" />
    <path d="M15 29.500A14.500 14.500 0 0 1 2.200 8l6.800 11 8 4z" fill="#37a455" />
    <path d="M15 29.500l5.800-10.500 1-7-2-4h8A14.500 14.500 0 0 1 15 29.500z" fill="#fccf38" />
    <circle cx="15" cy="15" r="7" fill="#fff" /><circle cx="15" cy="15" r="5.500" fill="#4a84ec" />
  </svg>
);
const FirefoxIcon = () => (
  <svg width="31" height="31" viewBox="0 0 31 31">
    <circle cx="16" cy="13" r="12" fill="#2c6bb0" />
    <path d="M10 3c4-3 11-2.500 14 1-3 0-4 2-6 1.500C15 5 12 6 10 3z" fill="#5fb5e0" />
    <path d="M4 3c1 1.500 2 2.500 4 3 3-.5 4 .5 4 2 2 0 3 .5 3 1.500-.5 1.500-3 2-3.500 4 1 3 4 3 6.500 2 1 3-2 4.500-5 4.500 3 3.500 9 3 11-1.500 1-3 .5-5-1-8 3 1 3.500 3 4 5 0-4-1-7-3.500-9.500 6 3.500 8 9 6.500 14.500C28 27 23 30.500 16 30.500S2.500 26 1 18.500C0 12 2 6 4 3z" fill="#e8751a" />
    <path d="M29.800 12c1 8-3 15-10 17.500 5-4 7.500-9 7.200-14.500 1 .5 2-1 2.800-3z" fill="#fbc53b" />
    <path d="M2 12c0 8 5 14 12 16-7 0-12-5-12.500-11z" fill="#c9441c" />
  </svg>
);
const WifiIcon = () => (
  <svg width="34" height="26" viewBox="0 0 34 26" fill="none" stroke="#1ea0e0" strokeWidth="5">
    <path d="M2 10c8-9 22-9 30 0" /><path d="M9 16.500c4.500-5 11.500-5 16 0" strokeWidth="4.500" />
    <circle cx="17" cy="22" r="3" fill="#1ea0e0" stroke="none" />
  </svg>
);
const SkypeIcon = () => (
  <svg width="31" height="31" viewBox="0 0 31 31">
    <path d="M9 2c3 0 4 .8 5 .7C22 2 28.500 8 27.800 16c2.500 5-1 12-7 12-2 0-3.500-.8-5-.8C7 27.500 2 22 2.200 14.500 0 9 3 2 9 2z" fill="#fff" stroke="#18a8e8" strokeWidth="2.500" />
    <text x="14.500" y="23" textAnchor="middle" fontFamily="Open Sans" fontWeight="700" fontSize="22" fill="#18a8e8">S</text>
    <circle cx="25" cy="25" r="5.500" fill="#6bad1c" /><path d="M22.500 25l2 2 3-3.500" fill="none" stroke="#fff" strokeWidth="1.300" />
  </svg>
);
const NotepadIcon = () => (
  <svg width="32" height="31" viewBox="0 0 32 31">
    <defs><linearGradient id="np" x1="1" y1="0" x2="0" y2="1"><stop offset="0" stopColor="#b8e4ea" /><stop offset="1" stopColor="#3d97ab" /></linearGradient></defs>
    <path d="M27 3l4 23-6 2z" fill="#c4b78e" /><path d="M2 26l23 2 4-2-2-23z" fill="#e9e6da" stroke="#999" strokeWidth=".5" />
    <path d="M9 3h18l-4 23L1 23z" fill="url(#np)" stroke="#6aa" strokeWidth=".5" />
    <path d="M11 1v4M14 1v4M17 1v4M20 1v4M23 1v4M26 1v4" stroke="#777" />
  </svg>
);
const PaintIcon = () => (
  <svg width="32" height="32" viewBox="0 0 32 32">
    <path d="M14 6c9-2 16 4 15 12-1 7-7 12-13 12-3 0-2-4-5-5-3-.8-8 0-9.500-4C-.5 14 5 8 14 6z" fill="#c9e3f4" stroke="#7aa5c8" />
    <circle cx="6" cy="18" r="2.500" fill="#d84a3c" /><circle cx="11" cy="12.500" r="2.700" fill="#5fb548" /><circle cx="18" cy="10" r="2.700" fill="#f0b429" />
    <circle cx="14" cy="19" r="2.300" fill="#fff" stroke="#7aa5c8" /><circle cx="21" cy="23" r="2.500" fill="#4a8fd0" />
    <path d="M26 8l2 .8L19 29l-2 2v-3z" fill="#e39336" stroke="#b5702a" strokeWidth=".5" />
    <path d="M23 0l9 2-4 8-3-1z" fill="#b8946a" />
  </svg>
);

function TaskSlot({ label, raised = false, pressed = false, stacked = false, children }: Kids & { label: string; raised?: boolean; pressed?: boolean; stacked?: boolean }) {
  const frame = pressed
    ? "border-t-2 border-l-2 border-t-[#777] border-l-[#777] border-r border-b border-r-white border-b-white bg-[#fafafa]"
    : raised
      ? "border-t border-l border-t-white border-l-white border-r-2 border-b-2 border-r-[#777] border-b-[#777]"
      : "";
  return (
    <div className="mr-[2px] flex h-[38px] w-12 shrink-0">
      <button aria-label={label} className={`flex flex-1 items-center justify-center ${frame}`}>
        {children}
      </button>
      {stacked && <span className={`w-1 border-t border-r-2 border-t-white ${pressed ? "border-r-[#aaa]" : "border-r-[#777]"}`} />}
    </div>
  );
}

function Taskbar() {
  return (
    <div className="flex h-11 shrink-0 items-center border-t border-[#dcdcdc] bg-[#f0f0f0] shadow-[inset_0_3px_0_#fafafa]">
      <button className="ml-[2px] flex h-[38px] w-[51px] shrink-0 items-center justify-center gap-px border-t border-r-2 border-b-2 border-l border-t-white border-r-[#777] border-b-[#777] border-l-white text-[12px] font-bold text-black">
        <svg width="16" height="15" viewBox="0 0 16 15">
          <path d="M2.500 2C4 1 6 1 7.500 2L6.500 7C5 6 3 6 1 7z" fill="#e5632d" /><path d="M8.500 2.500c2 1 4 1 6-.5L13 7.500c-2 1-4 1-5.500 0z" fill="#86b93c" />
          <path d="M1 8c2-1 4-1 5.500 0L5.500 13C4 12 2 12 0 13z" fill="#4a92d8" /><path d="M7.500 8.500c2 1 4 1 5.500 0L11.500 13.500c-2 1-4 1-5.500 0z" fill="#f3c02f" />
        </svg>
        Start
      </button>
      <span className="mr-2 ml-2 h-[34px] w-[2px] border-l border-[#999] bg-white" />
      <TaskSlot label="Internet Explorer"><IeIcon /></TaskSlot>
      <TaskSlot label="File Explorer" raised><FolderIcon /></TaskSlot>
      <TaskSlot label="Chrome" raised><ChromeIcon /></TaskSlot>
      <TaskSlot label="Firefox"><FirefoxIcon /></TaskSlot>
      <TaskSlot label="Excel" pressed stacked>
        <OfficeIcon letter="X" color="#1f7244"><path d="M16 4.500h14v22H16z" fill="#fff" stroke="#1f7244" /><path d="M19 8h4M24 8h4M19 11h4M24 11h4M19 14h4M24 14h4M19 17h4M24 17h4M19 20h4M24 20h4M19 23h4M24 23h4" stroke="#1f7244" strokeWidth="1.500" /></OfficeIcon>
      </TaskSlot>
      <TaskSlot label="OneNote">
        <OfficeIcon letter="N" color="#80397b"><path d="M16 4.500h11v22H16z" fill="#fff" stroke="#80397b" /><path d="M18 10h8M18 14h8M18 18h8M18 22h8" stroke="#80397b" /><path d="M27.500 4.500h2v6h-2zM27.500 12h2.500v6h-2.500zM27.500 19.500h2v6h-2z" fill="#fff" stroke="#80397b" /></OfficeIcon>
      </TaskSlot>
      <TaskSlot label="Outlook">
        <OfficeIcon letter="O" color="#0072c6"><path d="M16 8h14v15H16z" fill="#fff" stroke="#0072c6" /><path d="M17 11l6 6 7-8" fill="none" stroke="#0072c6" strokeWidth="2" /></OfficeIcon>
      </TaskSlot>
      <TaskSlot label="PowerPoint">
        <OfficeIcon letter="P" color="#d24726"><path d="M16 4.500h14v22H16z" fill="#fff" stroke="#d24726" /><path d="M19 20h9M19 23h9" stroke="#d24726" strokeWidth="1.500" /><circle cx="22" cy="13" r="4.500" fill="#d24726" /><path d="M23.500 7v4.500H28A5 5 0 0 0 23.500 7z" fill="#d24726" stroke="#fff" /></OfficeIcon>
      </TaskSlot>
      <TaskSlot label="Word">
        <OfficeIcon letter="W" color="#2b579a"><path d="M16 4.500h14v22H16z" fill="#fff" stroke="#2b579a" /><path d="M18 8h10M18 11h10M18 14h10M18 17h10M18 20h10M18 23h10" stroke="#2b579a" strokeWidth="1.300" /></OfficeIcon>
      </TaskSlot>
      <TaskSlot label="Wi-Fi" raised><WifiIcon /></TaskSlot>
      <TaskSlot label="Skype" raised stacked><SkypeIcon /></TaskSlot>
      <TaskSlot label="Notepad" raised><NotepadIcon /></TaskSlot>
      <TaskSlot label="Paint" raised><PaintIcon /></TaskSlot>

      <div className="ml-auto flex items-center text-[11px] text-black">
        <span className="h-[34px] w-[2px] border-l border-[#999] bg-white" />
        <button className="w-7 text-center text-[12px]">ES</button>
        <span className="h-[22px] w-[2px] border-l border-[#999] bg-white" />
        <div className="mr-[3px] ml-[2px] flex h-9 w-[183px] items-center border-t border-l border-[#888] pl-[5px]">
          <button aria-label="Hidden icons" className="mr-[9px]">
            <svg width="7" height="9" viewBox="0 0 7 9" fill="none" stroke="#222" strokeWidth="1.300"><path d="M1 4l2.500-2.500L6 4M1 8l2.500-2.500L6 8" /></svg>
          </button>
          <svg width="17" height="16" viewBox="0 0 17 16" fill="none" className="mr-[7px]" role="img" aria-label="Action center">
            <path d="M1.500 0v15M2 2c3-1 5 1 8.500.5v7C7 10 5 8 2 9.500" stroke="#777" /><circle cx="11.500" cy="11" r="5" fill="#d82c2c" /><path d="M9.500 9l4 4M13.500 9l-4 4" stroke="#fff" strokeWidth="1.600" />
          </svg>
          <svg width="16" height="15" viewBox="0 0 16 15" fill="none" stroke="#666" className="mr-2" role="img" aria-label="Battery">
            <path d="M5 1.500h4M1.500 2.500h9v12h-9zM3 4v9" /><path d="M6.500 6.500h8V9c0 2-2 3-4 3s-4-1-4-3zM8.500 3v3.500M12.500 3v3.500M10.500 12v2.500" fill="#f0f0f0" />
          </svg>
          <svg width="16" height="12" viewBox="0 0 16 12" fill="none" stroke="#888" className="mr-[14px]" role="img" aria-label="Network">
            <path d="M.5 9.500h2v2h-2zM3.500 7.500h2v4h-2zM6.500 5.500h2v6h-2zM9.500 3.500h2v8h-2zM12.500.5h2v11h-2z" />
          </svg>
          <time className="text-center leading-[17px]">09:24 a.m.<br />30/10/2016</time>
          <svg width="15" height="13" viewBox="0 0 15 13" className="ml-auto shrink-0" role="img" aria-label="Show desktop">
            <path d="M0 1l15-1v11L0 11z" fill="#2b62b8" /><path d="M1 2l13-1-7 6-6 1z" fill="#5f9ae0" /><path d="M0 10h15v2H0z" fill="#333" /><path d="M1 8h4v4H1z" fill="#aac8e8" />
          </svg>
        </div>
      </div>
    </div>
  );
}

export default function App() {
  return (
    <div className="flex h-screen flex-col overflow-hidden bg-[#e6e6e6] font-['Open_Sans',sans-serif] text-[12px] leading-4">
      <TitleBar />
      <TabBar />
      <Ribbon />
      <FormulaBar />
      <main className="flex min-h-0 flex-1">
        <Sheet />
        <div className="flex w-[21px] shrink-0 flex-col bg-[#e6e6e6] pt-px pl-[3px]">
          <ScrollButton dir="M0 5h7L3.500 1.500z" label="Scroll up" />
          <div className="w-[15px] flex-1 bg-[#dadada]">
            <div className="h-[98px] border border-[#ababab] bg-white" />
          </div>
          <ScrollButton dir="M0 2h7L3.500 5.500z" label="Scroll down" />
        </div>
      </main>
      <SheetTabs />
      <StatusBar />
      <Taskbar />
    </div>
  );
}
